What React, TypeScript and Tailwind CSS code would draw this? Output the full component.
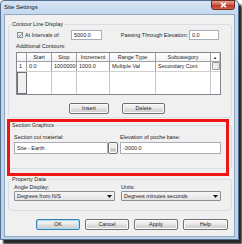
import type { ReactNode } from "react"

const inputBox = "bg-white border border-[#abadb3] flex items-center px-[2px]"

function Button({ className, children, isDefault }: { className: string; children: ReactNode; isDefault?: boolean }) {
  return (
    <div
      className={`h-[11px] flex items-center justify-center rounded-[2px] border bg-[linear-gradient(#f3f3f3_0%,#ebebeb_48%,#dddddd_52%,#cfcfcf_100%)] ${
        isDefault ? "border-[#3c7fb1] shadow-[inset_0_0_0_1px_#a8dcf7]" : "border-[#707070] shadow-[inset_0_0_0_1px_#fbfbfb]"
      } ${className}`}
    >
      {children}
    </div>
  )
}

function GroupBox({ title, className, children }: { title: string; className: string; children: ReactNode }) {
  return (
    <fieldset className={`border border-[#d5dfe5] rounded-[3px] ${className}`}>
      <legend className="ml-[2px] px-[1px]">{title}</legend>
      {children}
    </fieldset>
  )
}

function Dropdown({ value, className }: { value: string; className: string }) {
  return (
    <div className={`h-[10px] flex items-center justify-between rounded-[1px] border border-[#8e8f8f] bg-[linear-gradient(#f6f6f6,#e3e3e3)] pl-[2px] pr-[2px] ${className}`}>
      <span>{value}</span>
      <svg width="5" height="3" viewBox="0 0 5 3">
        <path d="M0 0H5L2.5 3Z" fill="#111" />
      </svg>
    </div>
  )
}

const cols = ["", "Start", "Stop", "Increment", "Range Type", "Subcategory"]
const row = ["1", "0.0", "10000000", "1000.0", "Multiple Val", "Secondary Cont"]
const widths = ["w-[10px]", "w-[25px]", "w-[25px]", "w-[33px]", "w-[46px]", "w-[55px]"]

function ContourTable() {
  return (
    <div className="w-[205px] h-[43px] border border-[#828790] bg-white flex flex-col overflow-hidden">
      <div className="flex h-[9px] border-b border-[#a0a0a0]">
        {cols.map((c, i) => (
          <div
            key={i}
            className={`${widths[i]} shrink-0 border-r border-[#a0a0a0] bg-[linear-gradient(#ffffff,#f1f2f4)] flex items-center justify-center`}
          >
            {c}
          </div>
        ))}
        <div className="w-[9px] shrink-0 flex items-center justify-center text-[4px] border-r border-[#c8c8c8]">▲</div>
      </div>
      <div className="flex h-[10px] border-b border-[#d0d0d0]">
        {row.map((c, i) => (
          <div
            key={i}
            className={`${widths[i]} shrink-0 border-r border-[#a0a0a0] flex items-center pl-[2px] whitespace-nowrap overflow-hidden`}
          >
            {c}
          </div>
        ))}
        <div className="w-[9px] shrink-0 flex justify-center">
          <div className="w-[8px] h-[8px] border border-[#9a9a9a] bg-[linear-gradient(90deg,#f4f4f4,#e0e0e0)] rounded-[1px]" />
        </div>
      </div>
      <div className="flex flex-1">
        {widths.map((w, i) => (
          <div
            key={i}
            className={`${w} shrink-0 border-r ${i === 0 ? "border-[#707070] bg-[#f0f0f0] border-l border-b border-t" : "border-[#c8c8c8]"}`}
          />
        ))}
      </div>
    </div>
  )
}

export default function App() {
  return (
    <div className="w-[242px] h-[244px] bg-white font-['Liberation_Sans',sans-serif] text-[5.5px] leading-[7px] text-[#1e1e1e]">
      <div className="relative w-[239px] h-[240px] flex flex-col rounded-t-[4px] border border-[#55708f] bg-[linear-gradient(#d6e4f4,#c3d8ee_14px,#bed3ea)] shadow-[3px_4px_2px_rgba(0,0,0,0.85)]">
        {/* title bar */}
        <div className="h-[13px] flex items-start pl-[3px]">
          <span className="mt-[3px] text-[6px] text-[#111]">Site Settings</span>
          <div className="ml-auto mr-[3px] -mt-[1px] w-[24px] h-[10px] rounded-b-[3px] border border-[#6e2b22] bg-[linear-gradient(#e8a493,#d0604c_45%,#c0392b_55%,#d1604a)] flex items-center justify-center">
            <svg width="7" height="6" viewBox="0 0 7 6">
              <path d="M1 0.8L6 5.2M6 0.8L1 5.2" stroke="#fff" strokeWidth="1.6" />
            </svg>
          </div>
        </div>

        {/* client area */}
        <div className="relative flex-1 ml-[3px] mr-[3px] mb-[2px] border border-[#8fa7c3] bg-[#f0f0f0] flex flex-col">
          <GroupBox title="Contour Line Display" className="mt-[6px] ml-[3px] mr-[2px] pb-[3px]">
            <div className="pl-[7px] pr-[9px] flex flex-col">
              <div className="mt-[2px] h-[10px] flex items-center mr-[3px]">
                <div className="ml-[1px] w-[6px] h-[6px] border border-[#8f8f8f] bg-[linear-gradient(#e9e9e9,#ffffff)] flex items-center justify-center">
                  <svg width="5" height="5" viewBox="0 0 5 5">
                    <path d="M0.6 2.6L1.9 4L4.4 0.8" stroke="#2b4f8a" strokeWidth="1" fill="none" />
                  </svg>
                </div>
                <span className="ml-[2px] w-[46px]">At Intervals of:</span>
                <div className={`${inputBox} w-[31px] h-[10px]`}>5000.0</div>
                <span className="ml-auto">Passing Through Elevation:</span>
                <div className={`${inputBox} ml-[1px] w-[30px] h-[10px]`}>0.0</div>
              </div>
              <div className="mt-[3px]">Additional Contours:</div>
              <div className="mt-[2px]">
                <ContourTable />
              </div>
              <div className="mt-[8px] flex">
                <Button className="ml-[53px] w-[40px]">Insert</Button>
                <Button className="ml-[13px] w-[43px]">Delete</Button>
              </div>
            </div>
          </GroupBox>

          <GroupBox title="Section Graphics" className="mt-[4px] ml-[3px] mr-[2px] pb-[14px]">
            <div className="pl-[5px] pr-[10px] flex">
              <div className="w-[106px] flex flex-col">
                <div className="mt-[5px]">Section cut material:</div>
                <div className="mt-[1px] flex">
                  <div className={`${inputBox} w-[94px] h-[12px]`}>Site - Earth</div>
                  <Button className="w-[10px] !h-[12px] rounded-[1px]">...</Button>
                </div>
              </div>
              <div className="flex-1 flex flex-col">
                <div className="mt-[5px]">Elevation of poche base:</div>
                <div className={`${inputBox} mt-[1px] h-[12px]`}>-3000.0</div>
              </div>
            </div>
          </GroupBox>

          <GroupBox title="Property Data" className="mt-[7px] ml-[3px] mr-[2px] pb-[9px]">
            <div className="pl-[5px] pr-[10px] flex">
              <div className="w-[107px] flex flex-col">
                <div className="mt-[1px]">Angle Display:</div>
                <Dropdown value="Degrees from N/S" className="w-[101px]" />
              </div>
              <div className="flex-1 flex flex-col">
                <div className="mt-[1px]">Units:</div>
                <Dropdown value="Degrees minutes seconds" />
              </div>
            </div>
          </GroupBox>

          <div className="mt-[8px] flex justify-end gap-[5px] mr-[6px]">
            <Button className="w-[44px]" isDefault>OK</Button>
            <Button className="w-[44px]">Cancel</Button>
            <Button className="w-[44px]">Apply</Button>
            <Button className="w-[45px]">Help</Button>
          </div>

          {/* annotation */}
          <div className="absolute left-[2px] top-[104px] w-[222px] h-[57px] border-[3px] border-[#f01414] pointer-events-none" />
        </div>
      </div>
    </div>
  )
}
